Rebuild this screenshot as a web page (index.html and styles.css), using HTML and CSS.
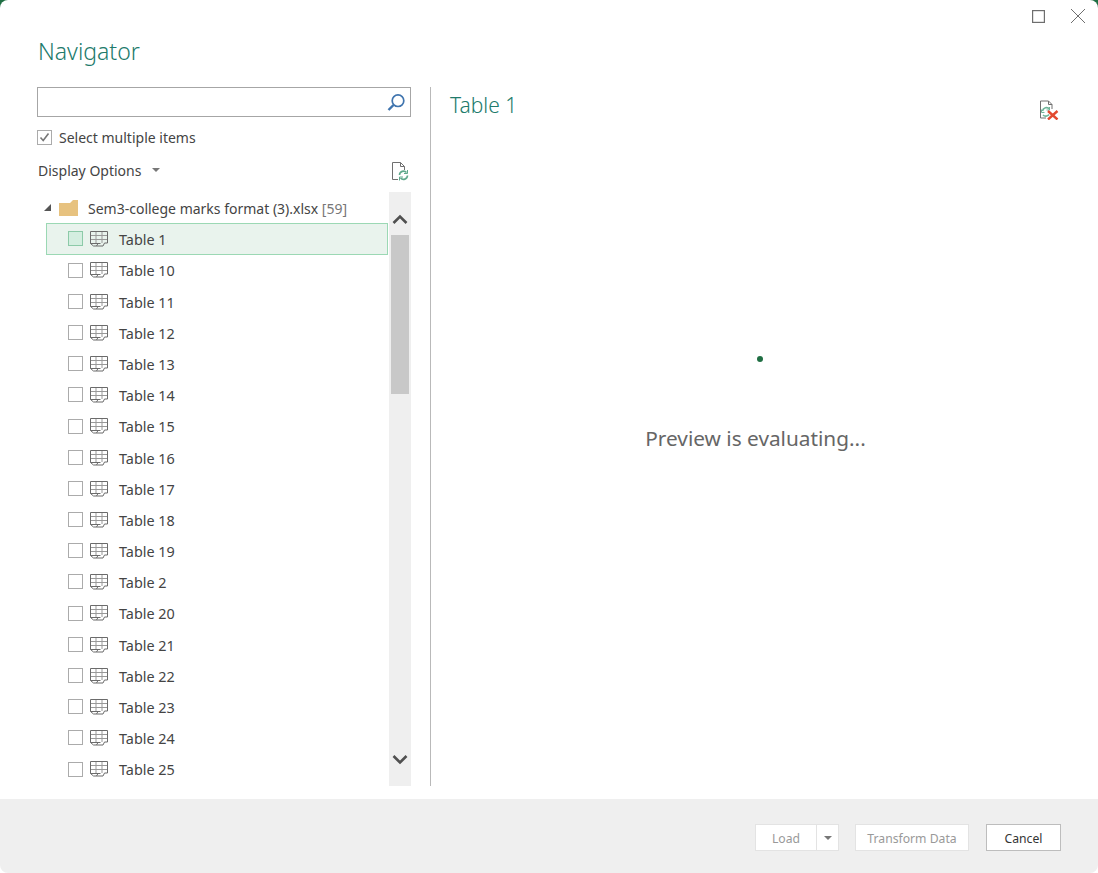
FILE: index.html
```html
<!DOCTYPE html>
<html lang="en">
<head>
<meta charset="UTF-8">
<title>Navigator</title>
<link rel="stylesheet" href="styles.css">
</head>
<body>
<div class="window">
  <div class="window-controls">
    <svg class="maximize" width="13" height="13" viewBox="0 0 13 13"><rect x=".6" y=".6" width="11.800" height="11.800" fill="none" stroke="#6e6e6e" stroke-width="1.200"/></svg>
    <svg width="16" height="16" viewBox="0 0 16 16"><path d="M1 1L15 15M15 1L1 15" fill="none" stroke="#6e6e6e" stroke-width="1"/></svg>
  </div>
  <h1 class="title">Navigator</h1>
  <div class="content">
    <div class="left">
      <div class="search">
        <svg width="20" height="20" viewBox="0 0 20 20"><circle cx="11" cy="8.700" r="5.800" fill="none" stroke="#3f74ae" stroke-width="1.700"/><path d="M6.500 13L1.500 18" stroke="#3f74ae" stroke-width="2.400" fill="none"/></svg>
      </div>
      <label class="multi">
        <span class="check checked">
          <svg width="13" height="13" viewBox="0 0 13 13"><path d="M2.500 6.500L5.200 9.500L10.500 2.500" fill="none" stroke="#777" stroke-width="1.600"/></svg>
        </span>
        Select multiple items
      </label>
      <div class="options">
        <span class="options-label">Display Options</span>
        <span class="caret"></span>
        <svg class="refresh" width="20" height="20" viewBox="0 0 20 20"><path d="M8 18.500H2.500V1.500H10.500L14.500 5.500V9M10.500 1.500V5.500H14.500" fill="none" stroke="#707070"/><path d="M9.500 14a4 4 0 0 1 7-2.500M17.500 14.500a4 4 0 0 1-7 2.500" fill="none" stroke="#5fa98c" stroke-width="1.600"/><path d="M17.500 9v3.500H14M9.500 19.500V16H13" fill="none" stroke="#5fa98c" stroke-width="1"/></svg>
      </div>
      <div class="nav-body">
        <div class="tree">
          <div class="folder-row">
            <span class="twisty"></span>
            <svg width="19" height="16" viewBox="0 0 19 16"><path d="M0 3H11L14 0H19V16H0Z" fill="#e7c27f"/></svg>
            <span class="folder-name">Sem3-college marks format (3).xlsx <span class="count">[59]</span></span>
          </div>
          <div class="rows" id="rows"></div>
        </div>
        <div class="scrollbar">
          <svg class="arrow" width="16" height="10" viewBox="0 0 16 10"><path d="M1.500 9L8 2.500L14.500 9" fill="none" stroke="#505050" stroke-width="2.600"/></svg>
          <div class="track"><div class="thumb"></div></div>
          <svg class="arrow" width="16" height="10" viewBox="0 0 16 10"><path d="M1.500 1L8 7.500L14.500 1" fill="none" stroke="#505050" stroke-width="2.600"/></svg>
        </div>
      </div>
    </div>
    <div class="right">
      <div class="right-head">
        <h2 class="preview-title">Table 1</h2>
        <svg width="20" height="20" viewBox="0 0 20 20"><path d="M7 18H1.500V1H9.500L13 4.500V9M9.500 1V4.500H13" fill="none" stroke="#707070"/><path d="M3.500 11a4 4 0 0 1 7-2M10 14.500a4 4 0 0 1-6 .5" fill="none" stroke="#6fb59a" stroke-width="1.700"/><path d="M2.500 9.500v3h3M10.500 7v3h-3" fill="none" stroke="#6fb59a"/><path d="M9 11L18.500 19.500M18.500 11L9 19.500" stroke="#e2492f" stroke-width="2.400"/></svg>
      </div>
      <div class="evaluating">
        <span class="dot"></span>
        <p class="message">Preview is evaluating...</p>
      </div>
    </div>
  </div>
  <div class="footer">
    <div class="split-btn">
      <button class="btn load" disabled>Load</button>
      <button class="btn drop" disabled><span class="caret"></span></button>
    </div>
    <button class="btn transform" disabled>Transform Data</button>
    <button class="btn cancel">Cancel</button>
  </div>
</div>
<script>
const names = ['Table 1','Table 10','Table 11','Table 12','Table 13','Table 14','Table 15','Table 16','Table 17','Table 18','Table 19','Table 2','Table 20','Table 21','Table 22','Table 23','Table 24','Table 25'];
const icon = '<svg class="table-icon" width="18" height="16" viewBox="0 0 18 16"><path d="M.5 4.500H17.500M.5 8.500H17.500M6 .5V12M12 .5V12" fill="none" stroke="#999"/><path d="M.5 12.500V.5H17.500V12H14.500L13 15H3.500L.5 12.500H10.500M6.500 15L8 12.500" fill="none" stroke="#6b6b6b"/></svg>';
document.getElementById('rows').innerHTML = names.map(function(n, i) {
  return '<div class="row' + (i === 0 ? ' selected' : '') + '"><span class="check"></span>' + icon + '<span class="row-name">' + n + '</span></div>';
}).join('');
</script>
</body>
</html>
```

FILE: styles.css
```css
* {
  box-sizing: border-box;
}
html, body {
  margin: 0;
  height: 100%;
}
body {
  background: linear-gradient(#1f6e43 0 20px, #fff 20px);
  font-family: 'Noto Sans', 'Open Sans', sans-serif;
  color: #444;
  overflow: hidden;
}
.window {
  height: 873px;
  background-color: #fff;
  border-radius: 8px;
  display: flex;
  flex-direction: column;
  overflow: hidden;
}
.window-controls {
  height: 32px;
  padding: 8px 12px 0 0;
  display: flex;
  justify-content: flex-end;
  align-items: flex-start;
  gap: 25px;
}
.maximize {
  margin-top: 2px;
}
.title {
  margin: 2px 0 0 38px;
  height: 53px;
  font-size: 23px;
  font-weight: 300;
  line-height: 34px;
  color: #217a6b;
}
.content {
  flex: 1;
  display: flex;
  min-height: 0;
}
.left {
  width: 431px;
  padding: 0 19px 0 37px;
  border-right: 1px solid #b9b9b9;
  margin-bottom: 13px;
  display: flex;
  flex-direction: column;
}
.search {
  height: 30px;
  border: 1px solid #a6a6a6;
  display: flex;
  justify-content: flex-end;
  align-items: center;
  padding-right: 3px;
}
.multi {
  margin-top: 10px;
  height: 20px;
  display: flex;
  align-items: center;
  gap: 7px;
  font-size: 14px;
}
.check {
  width: 15px;
  height: 15px;
  border: 1px solid #ababab;
  background-color: #fff;
  display: flex;
  align-items: center;
  justify-content: center;
  flex: none;
}
.options {
  margin-top: 12px;
  height: 22px;
  display: flex;
  align-items: center;
  font-size: 14px;
}
.options-label {
  margin-left: 1px;
}
.caret {
  display: inline-block;
  width: 0;
  height: 0;
  border-left: 4px solid transparent;
  border-right: 4px solid transparent;
  border-top: 4px solid #777;
}
.options .caret {
  margin-left: 11px;
}
.refresh {
  margin: 2px 1px 0 auto;
}
.nav-body {
  margin-top: 11px;
  flex: 1;
  min-height: 0;
  display: flex;
}
.tree {
  flex: 1;
  min-width: 0;
  overflow: hidden;
  padding-left: 9px;
}
.folder-row {
  height: 30.6px;
  padding-top: 2px;
  display: flex;
  align-items: center;
  font-size: 14px;
}
.twisty {
  width: 0;
  height: 0;
  margin: -2px 8px 0 -2px;
  border-left: 7px solid transparent;
  border-bottom: 7px solid #555;
}
.folder-name {
  margin-left: 10px;
}
.count {
  color: #777;
}
.row {
  height: 31.2px;
  display: flex;
  align-items: center;
  padding: 2px 0 0 21px;
  font-size: 14.4px;
  border: 1px solid transparent;
}
.row .check {
  margin-top: -0.6px;
}
.row.selected {
  height: 32.2px;
  margin-bottom: -1px;
  padding-top: 1px;
  background-color: #e9f3ed;
  border-color: #9bd8b4;
}
.row.selected .check {
  background-color: #d4eee0;
  border-color: #8ccaa8;
}
.table-icon {
  margin-left: 7px;
  flex: none;
}
.row-name {
  margin-left: 11px;
  padding-top: 2px;
  line-height: 20px;
}
.scrollbar {
  width: 22px;
  margin-left: 1px;
  background-color: #efefef;
  display: flex;
  flex-direction: column;
  align-items: center;
  padding: 22px 0 21px;
}
.arrow {
  flex: none;
}
.track {
  flex: 1;
  width: 18px;
  padding-top: 11px;
}
.thumb {
  height: 159px;
  background-color: #c8c8c8;
}
.right {
  flex: 1;
  min-width: 0;
  display: flex;
  flex-direction: column;
  padding: 0 39px 0 19px;
}
.right-head {
  display: flex;
  justify-content: space-between;
  align-items: flex-start;
  height: 60px;
}
.preview-title {
  margin: 0;
  font-size: 21px;
  font-weight: 300;
  line-height: 36px;
  color: #217a6b;
}
.right-head svg {
  margin-top: 13px;
  flex: none;
}
.evaluating {
  display: flex;
  flex-direction: column;
  align-items: center;
  padding-top: 209px;
}
.dot {
  width: 6px;
  height: 6px;
  border-radius: 50%;
  background-color: #1f6e43;
  margin-left: 10px;
}
.message {
  margin: 61px 0 0 2px;
  font-size: 20.8px;
  line-height: 30px;
  color: #666;
}
.footer {
  height: 74px;
  background-color: #efefef;
  display: flex;
  justify-content: flex-end;
  align-items: flex-start;
  padding: 25px 37px 0 0;
}
.split-btn {
  display: flex;
  margin-right: 16px;
}
.btn {
  height: 27px;
  padding: 1px 0 0;
  font-family: inherit;
  font-size: 12.2px;
  background-color: #fff;
  border: 1px solid #e3e3e3;
  color: #999;
}
.load {
  width: 62px;
}
.drop {
  width: 22px;
  border-left: 0;
  display: flex;
  align-items: center;
  justify-content: center;
}
.transform {
  width: 114px;
  margin-right: 17px;
}
.cancel {
  width: 75px;
  border: 1px solid #bdbdbd;
  color: #333;
}
```
